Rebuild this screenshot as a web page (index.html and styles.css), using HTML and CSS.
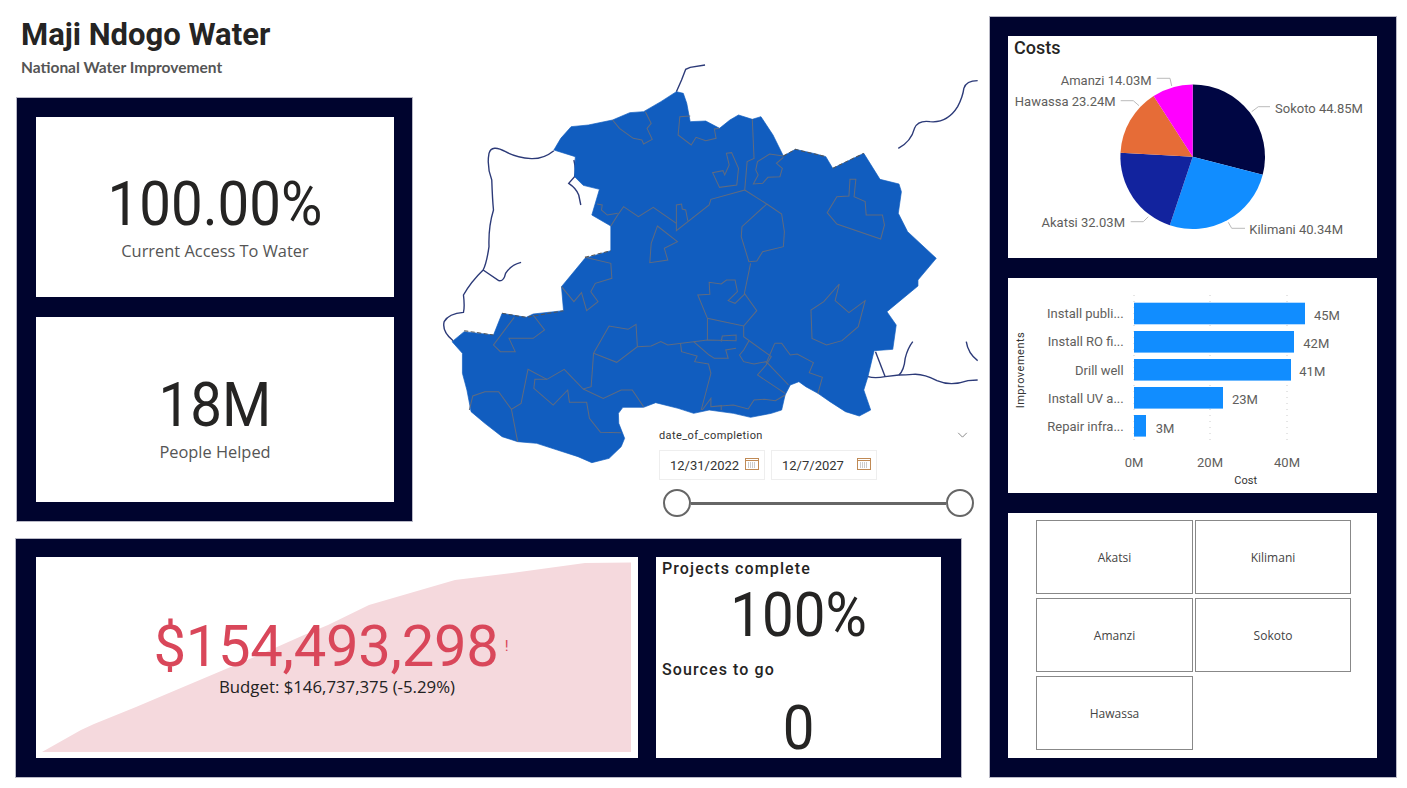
FILE: index.html
```html
<!DOCTYPE html>
<html lang="en">
<head>
  <meta charset="UTF-8">
  <title>Maji Ndogo Water</title>
  <link rel="stylesheet" href="styles.css">
</head>
<body>
  <div class="page">
    <div class="main">
      <div class="top">
        <div class="left">
          <h1>Maji Ndogo Water</h1>
          <p class="subtitle">National Water Improvement</p>
          <div class="panel kpi-panel">
            <div class="card kpi kpi-access">
              <div class="kpi-value">100.00%</div>
              <div class="kpi-label">Current Access To Water</div>
            </div>
            <div class="card kpi kpi-people">
              <div class="kpi-value">18M</div>
              <div class="kpi-label">People Helped</div>
            </div>
          </div>
        </div>

        <div class="map-area">
          <svg class="map" viewBox="0 0 1559 1260" preserveAspectRatio="none">
            <path class="river" d="M685 95 L700 60 L712 28 L725 22 L768 15"/>
            <path class="river" d="M1328 265 Q1365 245 1375 205 Q1385 180 1420 185 Q1470 190 1500 140 Q1515 110 1518 85 Q1525 62 1558 62"/>
            <path class="river" d="M330 272 Q300 297 265 296 Q220 292 190 275 Q150 252 142 280 Q135 320 150 360 Q152 420 155 450 Q140 500 142 560 Q135 610 125 630 Q90 665 68 705 Q72 740 68 757 Q25 760 12 785 Q5 815 38 842"/>
            <path class="river" d="M125 630 L170 662 Q185 665 190 640 Q205 615 235 607"/>
            <path class="river" d="M388 300 Q395 330 390 350 L373 370 Q395 385 402 405 L408 435"/>
            <path class="river" d="M1240 950 Q1260 956 1290 950 L1330 945 Q1350 945 1370 943 Q1400 940 1440 962 Q1480 980 1530 962 L1558 960"/>
            <path class="river" d="M1262 875 L1290 950"/>
            <path class="river" d="M1330 945 Q1345 930 1348 895 Q1355 865 1370 845"/>
            <path class="river" d="M1525 845 Q1530 880 1558 902"/>
            <path class="land" d="M685 95 L705 100 L715 130 L725 185 L770 183 L810 205 L840 180 L865 165 L905 178 L930 170 L965 225 L995 288 L1030 268 L1090 282 L1118 290 L1138 325 L1228 280 L1275 358 L1330 372 L1337 395 L1328 460 L1355 515 L1438 595 L1385 660 L1385 678 L1295 755 L1322 795 L1312 868 L1258 872 L1240 950 L1228 990 L1248 1050 L1215 1068 L1175 1055 L1130 1025 L1095 1000 L1060 980 L1040 965 L1015 975 L1000 1005 L990 1050 L960 1060 L900 1072 L850 1060 L780 1050 L735 1060 L690 1045 L625 1028 L590 1042 L530 1042 L517 1060 L518 1090 L535 1135 L525 1160 L490 1195 L440 1208 L400 1190 L340 1170 L280 1150 L225 1145 L180 1130 L130 1090 L90 1055 L78 990 L65 940 L65 880 L35 845 L70 815 L155 825 L180 760 L250 772 L270 762 L358 752 L352 680 L420 595 L495 572 L495 498 L440 465 L462 388 L415 376 L390 350 L392 290 L330 270 L350 235 L380 200 L430 195 L500 180 L550 158 L590 155 L640 125 Z"/>
            <path class="border" d="M500 180 L520 205 L560 235 L585 240 L590 252 L615 238 L600 205 L612 190 L595 155"/>
            <path class="border" d="M725 168 L695 170 L690 225 L728 255 L742 232 L770 242 L800 235 L795 207 L810 205"/>
            <path class="border" d="M905 178 L910 295 L890 305 L883 390 L785 418 L780 435 L685 512 L685 435 L700 432 L702 447 L712 450 L718 482"/>
            <path class="border" d="M830 280 L845 278 L865 325 L860 375 L810 382 L790 338 L820 332 L825 345 L838 315 Z"/>
            <path class="border" d="M995 288 L955 282 L920 305 L915 330 L922 345 L908 372 L935 370 L950 352 L985 350 L992 325 L975 310 L995 292"/>
            <path class="border" d="M883 390 L947 432 L875 500 L873 530 L895 605 L918 603 L935 575 L995 560 L998 515 L990 462 L947 432"/>
            <path class="border" d="M900 610 L882 700 L918 752 L880 798 L775 775 L747 705 L782 703 L780 667 L815 672 L830 660 L855 660 L862 695 L835 722 L855 730 L882 703"/>
            <path class="border" d="M775 775 L775 840"/>
            <path class="border" d="M880 798 L880 830 L960 890 L945 915 L920 945 L1000 1000"/>
            <path class="border" d="M685 490 L618 442 L575 470 L532 440 L515 465 L495 498"/>
            <path class="border" d="M455 432 L470 435 L468 450 L485 465 L515 460"/>
            <path class="border" d="M630 498 L688 545 L650 565 L660 600 L608 608 L612 550 Z"/>
            <path class="border" d="M420 592 L495 610 L498 655 L450 670 L437 695 L458 725 L425 752 L410 698 L388 725 L352 680"/>
            <path class="border" d="M270 765 L303 810 L270 835 L200 835 L218 875 L175 875 L155 855 L215 772"/>
            <path class="border" d="M445 880 L490 798 L545 808 L568 793 L572 860 L512 907 Z"/>
            <path class="border" d="M572 860 L612 858 L640 845 L660 855 L775 840 L858 842 L858 825 L818 828 L815 845"/>
            <path class="border" d="M697 850 L700 875 L745 888 L738 905 L778 912 L785 940 L757 1050"/>
            <path class="border" d="M735 845 L780 885 L795 895 L835 895 L828 870 L858 865"/>
            <path class="border" d="M895 843 L880 870 L868 885 L880 905 L910 912 L945 905 L1010 975"/>
            <path class="border" d="M970 850 L990 850 L1015 885 L1035 882 L1082 908 L1070 938 L1108 952 L1095 1000"/>
            <path class="border" d="M970 850 L945 910"/>
            <path class="border" d="M445 880 L438 980 L415 987 L360 928 L310 958 L275 958 L272 985 L328 1035 L370 990 L375 1027 L425 1027 L433 1075 L465 1117 L525 1118"/>
            <path class="border" d="M415 987 L473 1015 L525 990 L557 990 L590 1040"/>
            <path class="border" d="M310 958 L255 928 L235 1030 L207 1048 L225 1145"/>
            <path class="border" d="M207 1048 L170 995 L130 995 L95 1008 L85 1050"/>
            <path class="border" d="M760 1050 L785 1015 L785 1040 L815 1037 L815 1050 M785 1040 L850 1035 L893 1047 L910 1020 L940 1018 L972 1022 L1000 1005"/>
            <path class="border" d="M1188 358 L1205 358 L1200 410 L1232 425 L1235 465 L1282 465 L1288 495 L1277 537 L1150 492 L1122 458 L1150 410 L1185 408 Z"/>
            <path class="border" d="M1157 672 L1145 722 L1185 758 L1232 722 L1212 800 L1165 842 L1120 855 L1078 835 L1075 750 L1112 725 Z"/>
            <path class="dash" d="M70 812 L155 825 M180 760 L250 772 L358 752 M420 592 L495 572 M1138 325 L1228 280 M995 288 L1030 268 L1118 290"/>
          </svg>

          <div class="slicer">
            <div class="slicer-head">
              <span>date_of_completion</span>
              <svg class="chevron" viewBox="0 0 12 7"><path d="M1 1 L6 6 L11 1"/></svg>
            </div>
            <div class="slicer-dates">
              <div class="date-box">
                <span>12/31/2022</span>
                <svg class="cal" viewBox="0 0 14 13"><rect class="cal-frame" x="0.5" y="1.5" width="13" height="11"/><path class="cal-bar" d="M0.5 3.5 H13.5"/><path class="cal-dots" d="M3 6 H11 M3 8 H11 M3 10 H11"/></svg>
              </div>
              <div class="date-box">
                <span>12/7/2027</span>
                <svg class="cal" viewBox="0 0 14 13"><rect class="cal-frame" x="0.5" y="1.5" width="13" height="11"/><path class="cal-bar" d="M0.5 3.5 H13.5"/><path class="cal-dots" d="M3 6 H11 M3 8 H11 M3 10 H11"/></svg>
              </div>
            </div>
            <div class="slider">
              <span class="handle"></span>
              <span class="track"></span>
              <span class="handle"></span>
            </div>
          </div>
        </div>
      </div>

      <div class="panel bottom">
        <div class="card budget">
          <svg class="spark" viewBox="0 0 602 201"><path d="M6 195 L45 173 L58 167 L100 150 L133 136 L178 117 L223 98 L268 78 L292 68 L333 48 L419 23 L476 16 L549 6 L595 5.500 V195 Z"/></svg>
          <div class="budget-row">
            <span class="budget-value">$154,493,298</span>
            <span class="warn">!</span>
          </div>
          <div class="budget-goal">Budget: $146,737,375 (-5.29%)</div>
        </div>
        <div class="card projects">
          <div class="small-title">Projects complete</div>
          <div class="projects-value">100%</div>
          <div class="small-title sources">Sources to go</div>
          <div class="projects-value projects-zero">0</div>
        </div>
      </div>
    </div>

    <div class="panel side">
      <div class="card pie-card">
        <svg class="chart" viewBox="0 0 369 222">
          <text class="chart-title" x="6" y="18">Costs</text>
          <g transform="translate(184.7 120.7)">
            <path fill="#000643" d="M0 0 V-72.3 A72.3 72.3 0 0 1 70 18.1 Z"/>
            <path fill="#118dff" d="M0 0 L70 18.1 A72.3 72.3 0 0 1 -22.9 68.6 Z"/>
            <path fill="#12239e" d="M0 0 L-22.9 68.6 A72.3 72.3 0 0 1 -72.2 -3.900 Z"/>
            <path fill="#e66c37" d="M0 0 L-72.2 -3.900 A72.3 72.3 0 0 1 -39.1 -60.8 Z"/>
            <path fill="#ff00ff" d="M0 0 L-39.1 -60.8 A72.3 72.3 0 0 1 0 -72.3 Z"/>
          </g>
          <path class="leader" d="M148.7 42.3 H162 L163.7 50"/>
          <path class="leader" d="M112.7 64.7 H125.3 L131 69.7"/>
          <path class="leader" d="M262 70.7 H250.300 L243.700 75.700"/>
          <path class="leader" d="M237 192.300 H223.700 L220.300 186.300"/>
          <path class="leader" d="M122.700 185.700 H135.300 L140.300 180.700"/>
          <text class="pie-label end" x="143.700" y="49">Amanzi 14.03M</text>
          <text class="pie-label end" x="107.700" y="70">Hawassa 23.24M</text>
          <text class="pie-label" x="267" y="77">Sokoto 44.85M</text>
          <text class="pie-label" x="241.300" y="198">Kilimani 40.34M</text>
          <text class="pie-label end" x="117" y="191">Akatsi 32.03M</text>
        </svg>
      </div>

      <div class="card bar-card">
        <svg class="chart" viewBox="0 0 369 215">
          <path class="grid-line" d="M126 17 V167 M202 17 V167 M279 17 V167"/>
          <rect class="bar" x="126" y="24.700" width="171" height="21.600"/>
          <rect class="bar" x="126" y="53" width="160" height="21.600"/>
          <rect class="bar" x="126" y="81" width="157" height="21.600"/>
          <rect class="bar" x="126" y="109" width="89" height="21.600"/>
          <rect class="bar" x="126" y="137" width="12" height="21.600"/>
          <text class="bar-label end" x="115.700" y="40">Install publi...</text>
          <text class="bar-label end" x="115.700" y="68">Install RO fi...</text>
          <text class="bar-label end" x="115.700" y="97">Drill well</text>
          <text class="bar-label end" x="115.700" y="125">Install UV a...</text>
          <text class="bar-label end" x="115.700" y="153">Repair infra...</text>
          <text class="bar-label" x="306" y="42">45M</text>
          <text class="bar-label" x="295.300" y="70">42M</text>
          <text class="bar-label" x="291.300" y="98">41M</text>
          <text class="bar-label" x="224" y="126">23M</text>
          <text class="bar-label" x="147.700" y="155">3M</text>
          <text class="bar-label mid" x="126" y="188.500">0M</text>
          <text class="bar-label mid" x="202" y="188.500">20M</text>
          <text class="bar-label mid" x="279" y="188.500">40M</text>
          <text class="axis-title mid" x="237.700" y="206">Cost</text>
          <text class="axis-title axis-long mid" transform="translate(16 92) rotate(-90)">Improvements</text>
        </svg>
      </div>

      <div class="card tile-card">
        <div class="tile">Akatsi</div>
        <div class="tile">Kilimani</div>
        <div class="tile">Amanzi</div>
        <div class="tile">Sokoto</div>
        <div class="tile">Hawassa</div>
      </div>
    </div>
  </div>
</body>
</html>
```

FILE: styles.css
```css
html, body {
  margin: 0;
  background: #fff;
}

.page {
  display: flex;
  width: 1407px;
  height: 788px;
  overflow: hidden;
  font-family: 'Roboto', sans-serif;
  color: #252423;
}

.main {
  width: 947px;
  margin-left: 15px;
}

.top {
  display: flex;
  height: 538px;
}

.left {
  width: 398px;
  padding-left: 1px;
  box-sizing: border-box;
}

h1 {
  margin: 18px 0 0 5px;
  font-size: 31px;
  line-height: 34px;
  font-weight: 700;
}

.subtitle {
  margin: 6px 0 21px 5px;
  font-family: 'Lato', sans-serif;
  font-size: 15.500px;
  line-height: 18px;
  font-weight: 700;
  color: #555;
}

.panel {
  background: #00042e;
  border: 1px solid #b9b9c6;
  box-sizing: border-box;
}

.card {
  background: #fff;
}

.kpi-panel {
  display: flex;
  flex-direction: column;
  gap: 20px;
  width: 397px;
  height: 425px;
  padding: 19px 18px 19px 19px;
}

.kpi {
  display: flex;
  flex-direction: column;
  align-items: center;
  box-sizing: border-box;
}

.kpi-access {
  height: 180px;
  padding-top: 57px;
}

.kpi-people {
  height: 185px;
  padding-top: 58px;
}

/* Roboto squeezed a bit, closer to the narrow digits of the report font */
.kpi-value {
  font-size: 62px;
  line-height: 60px;
  transform: scaleX(0.91);
}

.kpi-label {
  margin-top: 5px;
  font-family: 'Open Sans', sans-serif;
  font-size: 16.400px;
  line-height: 24px;
  color: #555;
}

.map-area {
  position: relative;
  flex: 1;
}

.map {
  display: block;
  width: 538px;
  height: 420px;
  margin: 60px 0 0 27px;
}

.land {
  fill: #115dbf;
  stroke: #115dbf;
  stroke-width: 2;
  stroke-linejoin: round;
}

.border {
  fill: none;
  stroke: #5f6b80;
  stroke-width: 3;
}

.river {
  fill: none;
  stroke: #2c3a78;
  stroke-width: 4;
}

.dash {
  fill: none;
  stroke: #555;
  stroke-width: 3;
  stroke-dasharray: 12 7;
}

.slicer {
  position: absolute;
  left: 246px;
  top: 427px;
  width: 315px;
}

.slicer-head {
  display: flex;
  justify-content: space-between;
  align-items: center;
  height: 16px;
  font-size: 11px;
  letter-spacing: 0.4px;
  color: #333;
}

.chevron {
  width: 11px;
  height: 6px;
  margin-right: 6px;
}

.chevron path {
  fill: none;
  stroke: #777;
}

.slicer-dates {
  display: flex;
  gap: 6px;
  margin-top: 7px;
}

.date-box {
  display: flex;
  justify-content: space-between;
  align-items: center;
  box-sizing: border-box;
  width: 106px;
  height: 30px;
  padding: 0 5px 0 10px;
  border: 1px solid #eee;
  font-size: 13px;
  color: #333;
}

.cal {
  width: 14px;
  height: 13px;
  margin-bottom: 3px;
}

.cal-frame,
.cal-bar {
  fill: none;
  stroke: #c08a55;
}

.cal-dots {
  stroke: #999;
  stroke-dasharray: 1 1;
}

.slider {
  display: flex;
  align-items: center;
  margin: 9px 0 0 4px;
}

.handle {
  width: 24px;
  height: 24px;
  border: 2px solid #666;
  border-radius: 50%;
}

.track {
  flex: 1;
  height: 3px;
  background: #666;
}

.bottom {
  display: flex;
  gap: 18px;
  height: 240px;
  padding: 18px 20px 19px 20px;
}

.budget {
  position: relative;
  width: 602px;
  text-align: center;
}

.spark {
  position: absolute;
  left: 0;
  top: 0;
  width: 602px;
  height: 201px;
}

.spark path {
  fill: #f5d9dd;
}

.budget-row {
  position: relative;
  display: flex;
  justify-content: center;
  gap: 6px;
  margin: 60px 0 0 -12px;
  color: #d9475a;
}

.budget-value {
  font-size: 58px;
  line-height: 58px;
  letter-spacing: -0.300px;
}

.warn {
  width: 4px;
  font-size: 15px;
  line-height: 58px;
}

.budget-goal {
  position: relative;
  margin-top: 1px;
  font-family: 'Open Sans', sans-serif;
  font-size: 16.800px;
  line-height: 22px;
  color: #222;
}

.projects {
  flex: 1;
  padding: 1px 0 0 6px;
}

.small-title {
  font-size: 16px;
  line-height: 22px;
  font-weight: 500;
  letter-spacing: 1.100px;
}

.sources {
  margin-top: 9px;
}

.projects-value {
  margin-right: 6px;
  font-size: 62px;
  line-height: 70px;
  text-align: center;
  transform: scaleX(0.91);
}

.projects-zero {
  margin-top: 12px;
}

.side {
  display: flex;
  flex-direction: column;
  gap: 20px;
  width: 408px;
  height: 762px;
  margin: 16px 0 0 27px;
  padding: 19px 19px 19px 18px;
}

.pie-card {
  height: 222px;
}

.bar-card {
  height: 215px;
}

.chart {
  display: block;
  width: 369px;
  height: 100%;
}

.chart-title {
  font-size: 18px;
  font-weight: 500;
  fill: #252423;
}

.end {
  text-anchor: end;
}

.mid {
  text-anchor: middle;
}

.leader {
  fill: none;
  stroke: #bbb;
}

.pie-label,
.bar-label {
  font-size: 13px;
  fill: #605e5c;
}

.axis-title {
  font-size: 11px;
  fill: #333;
}

.axis-long {
  letter-spacing: 0.5px;
}

.bar {
  fill: #118dff;
}

.grid-line {
  fill: none;
  stroke: #ccc;
  stroke-dasharray: 1 5;
}

.tile-card {
  display: grid;
  grid-template-columns: 157px 156px;
  grid-auto-rows: 74px;
  gap: 4px 2px;
  height: 245px;
  box-sizing: border-box;
  padding: 7px 0 0 28px;
}

.tile {
  display: flex;
  align-items: center;
  justify-content: center;
  border: 1px solid #888;
  font-family: 'Open Sans', sans-serif;
  font-size: 12px;
  color: #444;
}
```
